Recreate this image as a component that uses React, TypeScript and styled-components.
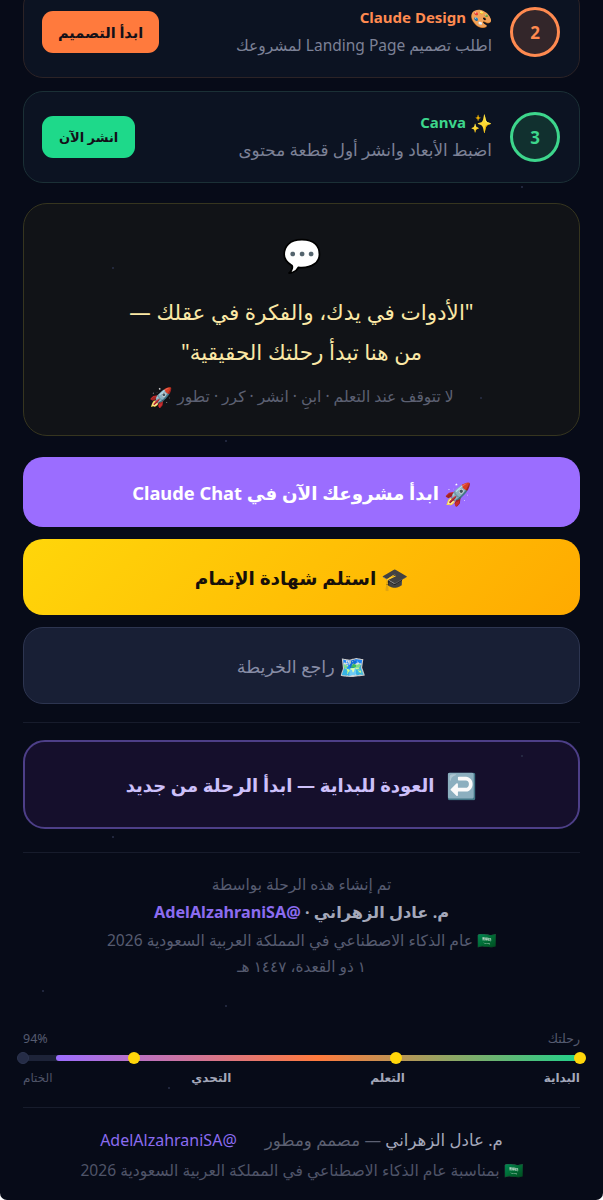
import styled, { createGlobalStyle } from "styled-components";

const GlobalStyle = createGlobalStyle`
  html, body {
    margin: 0;
    padding: 0;
    background: #fff;
  }
  body {
    font-family: "Noto Sans", Roboto, "DejaVu Sans", sans-serif;
  }
`;

const Page = styled.div`
  position: relative;
  width: 603px;
  height: 1200px;
  overflow: hidden;
  box-sizing: border-box;
  padding: 0 23px;
  background: #070b18;
  border-radius: 0 0 7px 7px;
  display: flex;
  flex-direction: column;
`;

const Star = styled.span<{ $x: number; $y: number }>`
  position: absolute;
  left: ${p => p.$x}px;
  top: ${p => p.$y}px;
  width: 2px;
  height: 2px;
  border-radius: 50%;
  background: #2a3048;
`;

const Emoji = styled.span<{ $size: number }>`
  font-size: ${p => p.$size}px;
  line-height: 1;
  vertical-align: -0.1em;
`;

const StepList = styled.div`
  display: flex;
  flex-direction: column;
  gap: 13px;
  margin-top: -14px;
`;

const StepCard = styled.div<{ $tint: string }>`
  height: 92px;
  box-sizing: border-box;
  display: flex;
  align-items: center;
  gap: 18px;
  padding: 0 19px 0 18px;
  background: #0c1322;
  border: 1px solid ${p => p.$tint};
  border-radius: 20px;
`;

const StepNumber = styled.div<{ $color: string; $fill: string }>`
  width: 50px;
  height: 50px;
  flex: none;
  box-sizing: border-box;
  display: flex;
  align-items: center;
  justify-content: center;
  border: 3px solid ${p => p.$color};
  border-radius: 50%;
  background: ${p => p.$fill};
  color: ${p => p.$color};
  font-size: 17px;
  font-weight: 700;
`;

const StepBody = styled.div`
  flex: 1;
  display: flex;
  flex-direction: column;
  gap: 6px;
`;

const StepTitle = styled.div<{ $color: string }>`
  color: ${p => p.$color};
  font-size: 15px;
  line-height: 20px;
  font-weight: 700;
`;

const StepText = styled.div<{ $size: number }>`
  color: #7c8196;
  font-size: ${p => p.$size}px;
  line-height: 24px;
`;

const StepButton = styled.div<{ $bg: string; $size: number; $pad: number }>`
  height: 42px;
  flex: none;
  padding: 0 ${p => p.$pad}px;
  display: flex;
  align-items: center;
  background: ${p => p.$bg};
  border-radius: 11px;
  color: #131018;
  font-size: ${p => p.$size}px;
  font-weight: 700;
`;

const QuoteCard = styled.div`
  height: 233px;
  box-sizing: border-box;
  margin-top: 20px;
  padding-top: 31px;
  display: flex;
  flex-direction: column;
  align-items: center;
  background: #111317;
  border: 1px solid #36351f;
  border-radius: 24px;
`;

const QuoteIcon = styled.div`
  font-size: 32px;
  line-height: 40px;
`;

const QuoteText = styled.div`
  margin-top: 17px;
  color: #fbe8a6;
  font-size: 21.5px;
  line-height: 40px;
  text-align: center;
`;

const QuoteSub = styled.div`
  margin-top: 13px;
  color: #5c6072;
  font-size: 15.5px;
`;

const Actions = styled.div`
  margin-top: 21px;
  display: flex;
  flex-direction: column;
  gap: 12px;
`;

const ActionButton = styled.div<{ $h: number; $bg: string; $color: string; $size: number; $weight?: number; $border?: string }>`
  height: ${p => p.$h}px;
  box-sizing: border-box;
  display: flex;
  align-items: center;
  justify-content: center;
  background: ${p => p.$bg};
  color: ${p => p.$color};
  border: ${p => (p.$border ? `1px solid ${p.$border}` : "none")};
  border-radius: 20px;
  font-size: ${p => p.$size}px;
  font-weight: ${p => p.$weight ?? 700};
`;

const Divider = styled.div<{ $top: number }>`
  height: 1px;
  margin-top: ${p => p.$top}px;
  background: #171c2c;
  flex: none;
`;

const ReturnButton = styled.div`
  height: 89px;
  margin-top: 17px;
  box-sizing: border-box;
  display: flex;
  align-items: center;
  justify-content: center;
  gap: 12px;
  background: #150f2c;
  border: 2px solid #4d3f88;
  border-radius: 22px;
  color: #cdc0fa;
  font-size: 18px;
  font-weight: 700;
`;

const ReturnIcon = styled.span`
  font-size: 25px;
  line-height: 30px;
`;

const Credits = styled.div`
  margin-top: 20px;
  display: flex;
  flex-direction: column;
  align-items: center;
`;

const CreditLine = styled.div<{ $size: number; $color: string; $h: number; $weight?: number }>`
  height: ${p => p.$h}px;
  line-height: ${p => p.$h}px;
  font-size: ${p => p.$size}px;
  color: ${p => p.$color};
  font-weight: ${p => p.$weight ?? 400};
`;

const Handle = styled.span`
  color: #8b6cf0;
`;

const Progress = styled.div`
  margin-top: 52px;
`;

const ProgressHead = styled.div`
  display: flex;
  justify-content: space-between;
  color: #565b70;
  font-size: 12.5px;
  line-height: 16px;
`;

const Track = styled.div`
  position: relative;
  height: 6px;
  margin-top: 8px;
  border-radius: 3px;
  background: #1d2338;
`;

const TrackFill = styled.div`
  position: absolute;
  top: 0;
  right: 0;
  height: 100%;
  border-radius: 3px;
  background: linear-gradient(to left, #22d18b, #ff7a3d 50%, #9b6dff);
`;

const Milestone = styled.span<{ $dim?: boolean }>`
  position: absolute;
  top: -3px;
  width: 12px;
  height: 12px;
  margin-right: -6px;
  border-radius: 50%;
  background: ${p => (p.$dim ? "#252c46" : "#ffd60a")};
  border: ${p => (p.$dim ? "1px solid #2d3550" : "none")};
  box-sizing: border-box;
`;

const Labels = styled.div`
  display: flex;
  justify-content: space-between;
  margin-top: 9px;
`;

const Label = styled.span<{ $dim?: boolean }>`
  color: ${p => (p.$dim ? "#4f5468" : "#a4a8ba")};
  font-size: 12px;
  font-weight: ${p => (p.$dim ? 400 : 700)};
  line-height: 16px;
`;

const Footer = styled.div`
  margin-top: 21px;
  display: flex;
  flex-direction: column;
  align-items: center;
  gap: 9px;
`;

const FooterLine = styled.div`
  display: flex;
  align-items: center;
  gap: 28px;
  font-size: 16.6px;
  line-height: 22px;
  color: #5c6072;
`;

const FooterName = styled.span`
  color: #a4a8ba;
`;

const FooterHandle = styled(Handle)`
  font-size: 16px;
`;

const FooterNote = styled.div`
  color: #4f5468;
  font-size: 15.6px;
  line-height: 20px;
`;

const stars: Array<[number, number]> = [
  [521, 186], [112, 267], [225, 440], [480, 397], [521, 755], [112, 836], [42, 990], [225, 1005], [168, 1087],
];

const milestones = [0, 33, 80];

export default function App() {
  return (
    <Page dir="rtl">
      <GlobalStyle />
      {stars.map(([x, y]) => (
        <Star key={`${x}-${y}`} $x={x} $y={y} />
      ))}
      <StepList>
        <StepCard $tint="#2c2326">
          <StepNumber $color="#ff8a50" $fill="#33262a">2</StepNumber>
          <StepBody>
            <StepTitle $color="#ff8a50"><Emoji $size={18}>🎨</Emoji> Claude Design</StepTitle>
            <StepText $size={15.5}>اطلب تصميم Landing Page لمشروعك</StepText>
          </StepBody>
          <StepButton $bg="#ff7a3d" $size={14.5} $pad={16}>ابدأ التصميم</StepButton>
        </StepCard>
        <StepCard $tint="#1b3036">
          <StepNumber $color="#3dd68c" $fill="#11302f">3</StepNumber>
          <StepBody>
            <StepTitle $color="#3dd68c"><Emoji $size={18}>✨</Emoji> Canva</StepTitle>
            <StepText $size={16.8}>اضبط الأبعاد وانشر أول قطعة محتوى</StepText>
          </StepBody>
          <StepButton $bg="#1ed98a" $size={13} $pad={17}>انشر الآن</StepButton>
        </StepCard>
      </StepList>

      <QuoteCard>
        <QuoteIcon>💬</QuoteIcon>
        <QuoteText>
          "الأدوات في يدك، والفكرة في عقلك —
          <br />
          من هنا تبدأ رحلتك الحقيقية"
        </QuoteText>
        <QuoteSub>لا تتوقف عند التعلم · ابنِ · انشر · كرر · تطور <Emoji $size={19}>🚀</Emoji></QuoteSub>
      </QuoteCard>

      <Actions>
        <ActionButton $h={70} $bg="#9b6dff" $color="#fff" $size={18.3}>
          <span><Emoji $size={22}>🚀</Emoji> ابدأ مشروعك الآن في Claude Chat</span>
        </ActionButton>
        <ActionButton $h={76} $bg="linear-gradient(135deg, #ffd60a, #ffaa00)" $color="#17100a" $size={18.5}>
          <span><Emoji $size={22}>🎓</Emoji> استلم شهادة الإتمام</span>
        </ActionButton>
        <ActionButton $h={77} $bg="#181f35" $color="#878ca5" $border="#2d3550" $size={17.5} $weight={400}>
          <span><Emoji $size={22}>🗺️</Emoji> راجع الخريطة</span>
        </ActionButton>
      </Actions>

      <Divider $top={18} />
      <ReturnButton>
        <ReturnIcon>↩️</ReturnIcon>
        <span>العودة للبداية — ابدأ الرحلة من جديد</span>
      </ReturnButton>
      <Divider $top={23} />

      <Credits>
        <CreditLine $size={15.4} $color="#565b70" $h={24}>تم إنشاء هذه الرحلة بواسطة</CreditLine>
        <CreditLine $size={16.2} $color="#a4a8ba" $h={30} $weight={700}>
          م. عادل الزهراني · <Handle>@AdelAlzahraniSA</Handle>
        </CreditLine>
        <CreditLine $size={15.6} $color="#565b70" $h={26}>🇸🇦 عام الذكاء الاصطناعي في المملكة العربية السعودية 2026</CreditLine>
        <CreditLine $size={15.3} $color="#565b70" $h={26}>١ ذو القعدة، ١٤٤٧ هـ</CreditLine>
      </Credits>

      <Progress>
        <ProgressHead>
          <span>رحلتك</span>
          <span>94%</span>
        </ProgressHead>
        <Track>
          <TrackFill style={{ width: "94%" }} />
          {milestones.map(m => (
            <Milestone key={m} style={{ right: `${m}%` }} />
          ))}
          <Milestone $dim style={{ right: "100%" }} />
        </Track>
        <Labels>
          <Label>البداية</Label>
          <Label>التعلم</Label>
          <Label>التحدي</Label>
          <Label $dim>الختام</Label>
        </Labels>
      </Progress>

      <Divider $top={21} />
      <Footer>
        <FooterLine>
          <span>
            <FooterName>م. عادل الزهراني</FooterName> — مصمم ومطور
          </span>
          <FooterHandle>@AdelAlzahraniSA</FooterHandle>
        </FooterLine>
        <FooterNote>🇸🇦 بمناسبة عام الذكاء الاصطناعي في المملكة العربية السعودية 2026</FooterNote>
      </Footer>
    </Page>
  );
}
